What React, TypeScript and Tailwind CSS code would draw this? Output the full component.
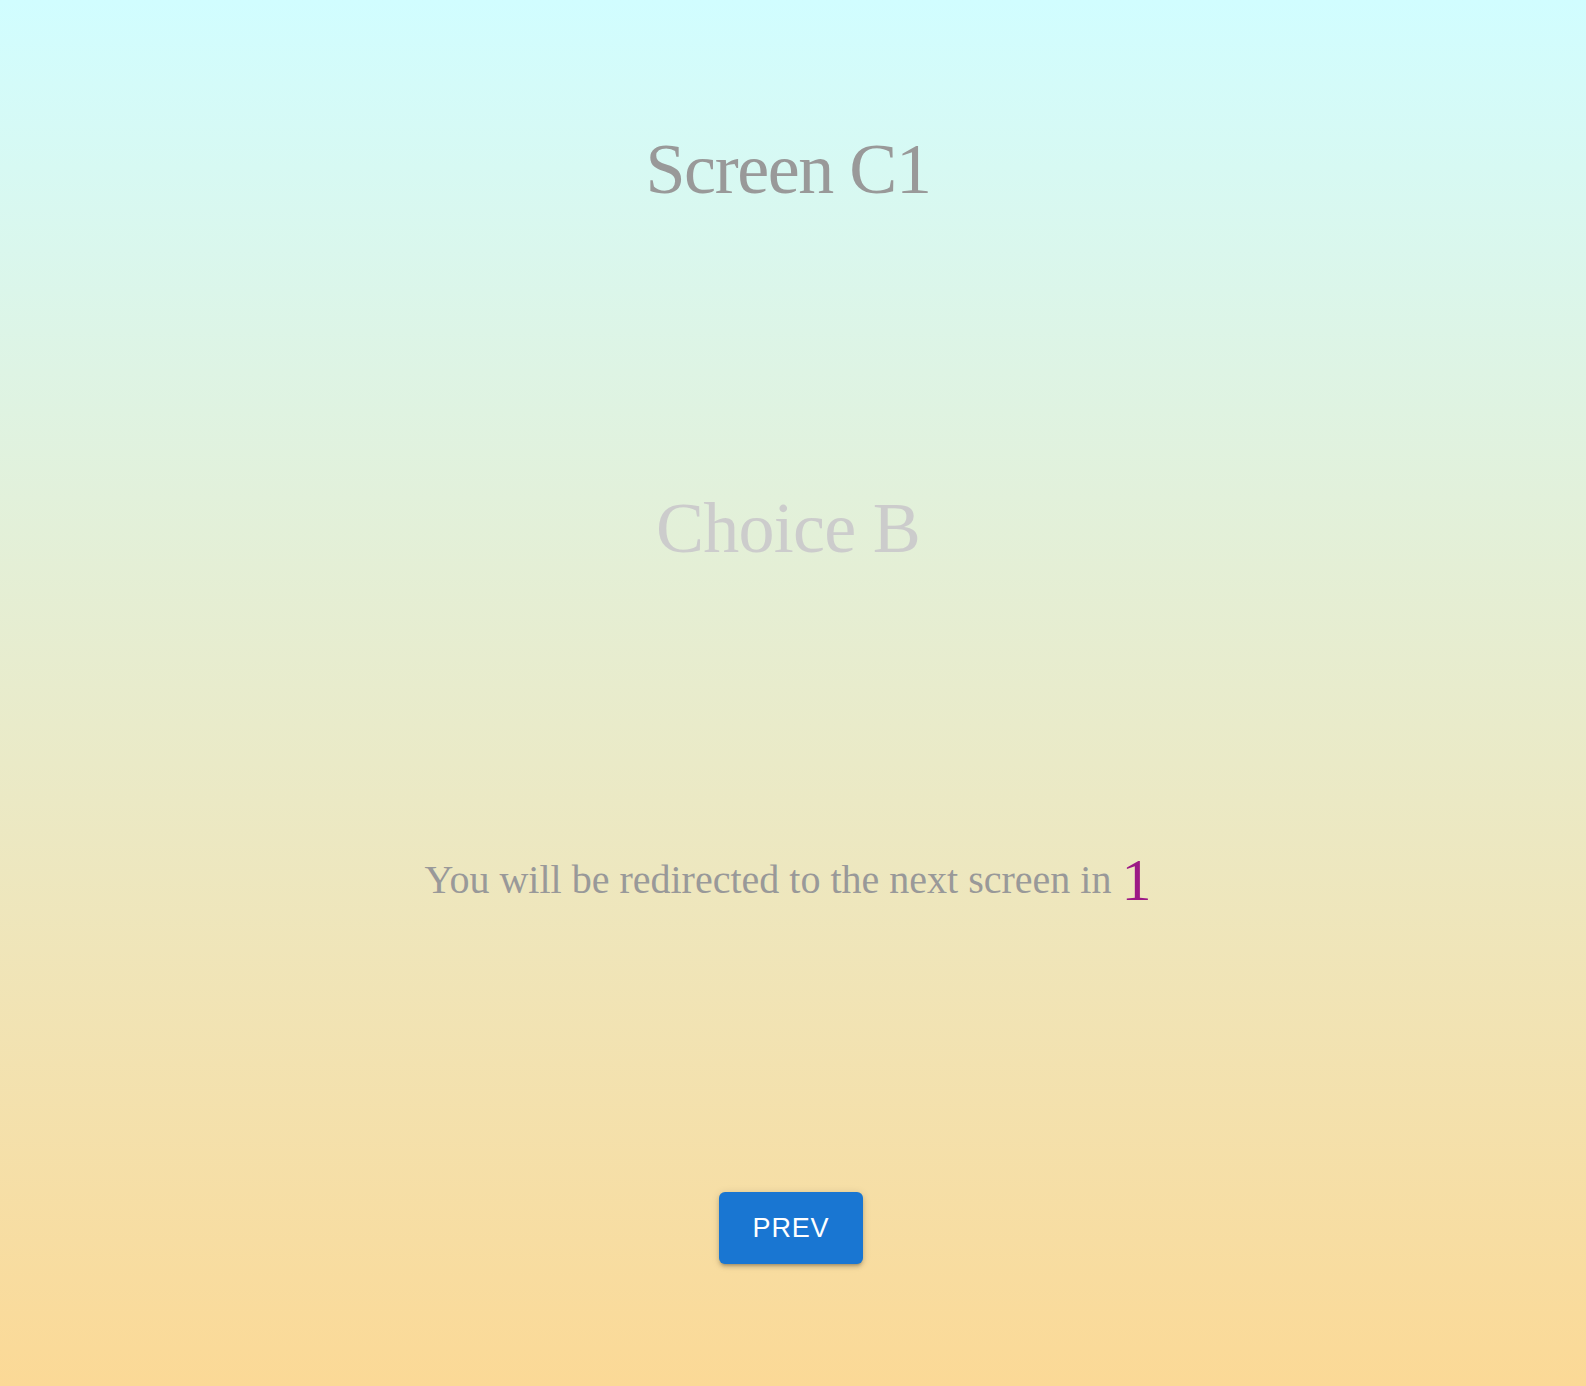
export default function App() {
  return (
    <div className="min-h-screen w-full bg-gradient-to-b from-[#d1fdff] to-[#fbd996] font-['Liberation_Serif',serif]">
      <div className="mr-[10px] flex flex-col items-center pt-[133px]">
        <h1 className="text-[72px] leading-none font-normal tracking-[-0.02em] text-[#999999]">Screen C1</h1>
        <h2 className="mt-[287px] text-[72px] leading-none font-normal tracking-[-0.01em] text-[#cccccc]">Choice B</h2>
        <div className="mt-[271px] flex items-center gap-[10px]">
          <span className="text-[40px] text-[#999999]">You will be redirected to the next screen in</span>
          <span className="text-[60px] text-[#9c1a86]">1</span>
        </div>
        <button className="mt-[267px] ml-[6px] h-[72px] w-[144px] rounded-[6px] bg-[#1976d2] font-['Liberation_Sans',sans-serif] text-[27px] tracking-[0.03em] text-white shadow-[0_3px_3px_-2px_rgba(0,0,0,0.2),0_3px_4px_0_rgba(0,0,0,0.14),0_1px_8px_0_rgba(0,0,0,0.12)]">
          PREV
        </button>
      </div>
    </div>
  );
}
